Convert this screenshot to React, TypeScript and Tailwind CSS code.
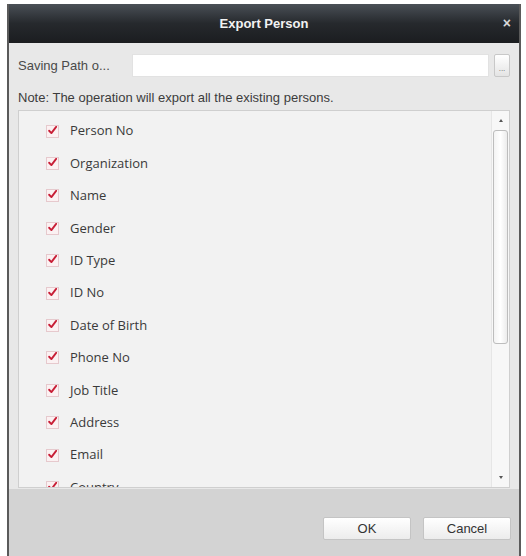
import React from 'react';

const fields = [
  'Person No',
  'Organization',
  'Name',
  'Gender',
  'ID Type',
  'ID No',
  'Date of Birth',
  'Phone No',
  'Job Title',
  'Address',
  'Email',
  'Country',
];

const CheckMark: React.FC = () => (
  <span className="flex h-[13px] w-[13px] items-center justify-center border border-[#e6c9cd] bg-[#fbf1f2]">
    <svg width="13" height="13" viewBox="0 0 13 13" className="-mt-[2px]">
      <path d="M2.5 6.8 L5.2 9.6 L10.8 2.2" fill="none" stroke="#c81e36" strokeWidth="2.2" strokeLinecap="round" strokeLinejoin="round" />
    </svg>
  </span>
);

const FieldRow: React.FC<{ label: string }> = ({ label }) => (
  <div className="flex h-[32.4px] shrink-0 items-center gap-[11px] pl-[27px]">
    <CheckMark />
    <span className="text-[13px] text-[#3a3a3a]" style={{ fontFamily: '"Open Sans", sans-serif' }}>
      {label}
    </span>
  </div>
);

const App: React.FC = () => {
  return (
    <div className="h-[556px] w-[526px] overflow-hidden bg-white pl-[7px] pr-[5px] pt-[4px]" style={{ fontFamily: '"Liberation Sans", Arial, sans-serif' }}>
      <div className="flex h-[552px] flex-col border-x-2 border-[#5a5a5a]">
        {/* title bar */}
        <div className="relative flex h-[39px] shrink-0 items-center justify-center bg-gradient-to-b from-[#4a5057] via-[#26292d] to-[#1b1d20]">
          <span className="text-[13px] font-bold text-[#f2f2f2]">Export Person</span>
          <span className="absolute right-[8px] top-[12px] text-[14px] font-bold leading-none text-[#d8d8d8]">×</span>
        </div>

        <div className="flex flex-1 flex-col bg-[#e8e8e8]">
          <div className="flex flex-col px-[9px] pt-[11px]">
            <div className="flex h-[23px] items-center">
              <span className="w-[114px] shrink-0 text-[13px] text-[#4a4a4a]">Saving Path o...</span>
              <div className="h-[23px] flex-1 border border-[#e2e2e2] bg-white" />
              <div className="ml-[5px] flex h-[23px] w-[16px] items-end justify-center rounded-[2px] border border-[#c8c8c8] bg-gradient-to-b from-white to-[#e4e4e4] pb-[3px]">
                <span className="text-[8px] leading-none text-[#666]">...</span>
              </div>
            </div>
            <div className="mt-[13px] text-[13px] leading-[16px] text-[#3c3c3c]">
              Note: The operation will export all the existing persons.
            </div>
          </div>

          {/* field list */}
          <div className="mx-[9px] mt-[4px] flex h-[378px] border border-[#cfcfcf] bg-[#f2f2f2]">
            <div className="flex flex-1 flex-col overflow-hidden pt-[4px]">
              {fields.map((f) => (
                <FieldRow key={f} label={f} />
              ))}
            </div>
            <div className="flex w-[18px] shrink-0 flex-col items-center border-l border-[#e6e6e6] bg-[#f7f7f7] py-[8px]">
              <span className="h-0 w-0 border-x-[2px] border-b-[3px] border-x-transparent border-b-[#555]" />
              <div className="mt-[8px] h-[214px] w-[15px] rounded-[3px] border border-[#bdbdbd] bg-gradient-to-r from-[#f3f3f3] via-white to-[#ececec]" />
              <div className="flex-1" />
              <span className="h-0 w-0 border-x-[2px] border-t-[3px] border-x-transparent border-t-[#555]" />
            </div>
          </div>

          {/* footer */}
          <div className="mt-[1px] flex flex-1 items-start justify-end gap-[12px] bg-[#d3d3d3] pr-[8px] pt-[28px]">
            <button className="h-[23px] w-[88px] rounded-[2px] border border-[#c4c4c4] bg-gradient-to-b from-white to-[#ececec] text-[13px] text-[#333]">
              OK
            </button>
            <button className="h-[23px] w-[88px] rounded-[2px] border border-[#c4c4c4] bg-gradient-to-b from-white to-[#ececec] text-[13px] text-[#333]">
              Cancel
            </button>
          </div>
        </div>
      </div>
    </div>
  );
};

export default App;
